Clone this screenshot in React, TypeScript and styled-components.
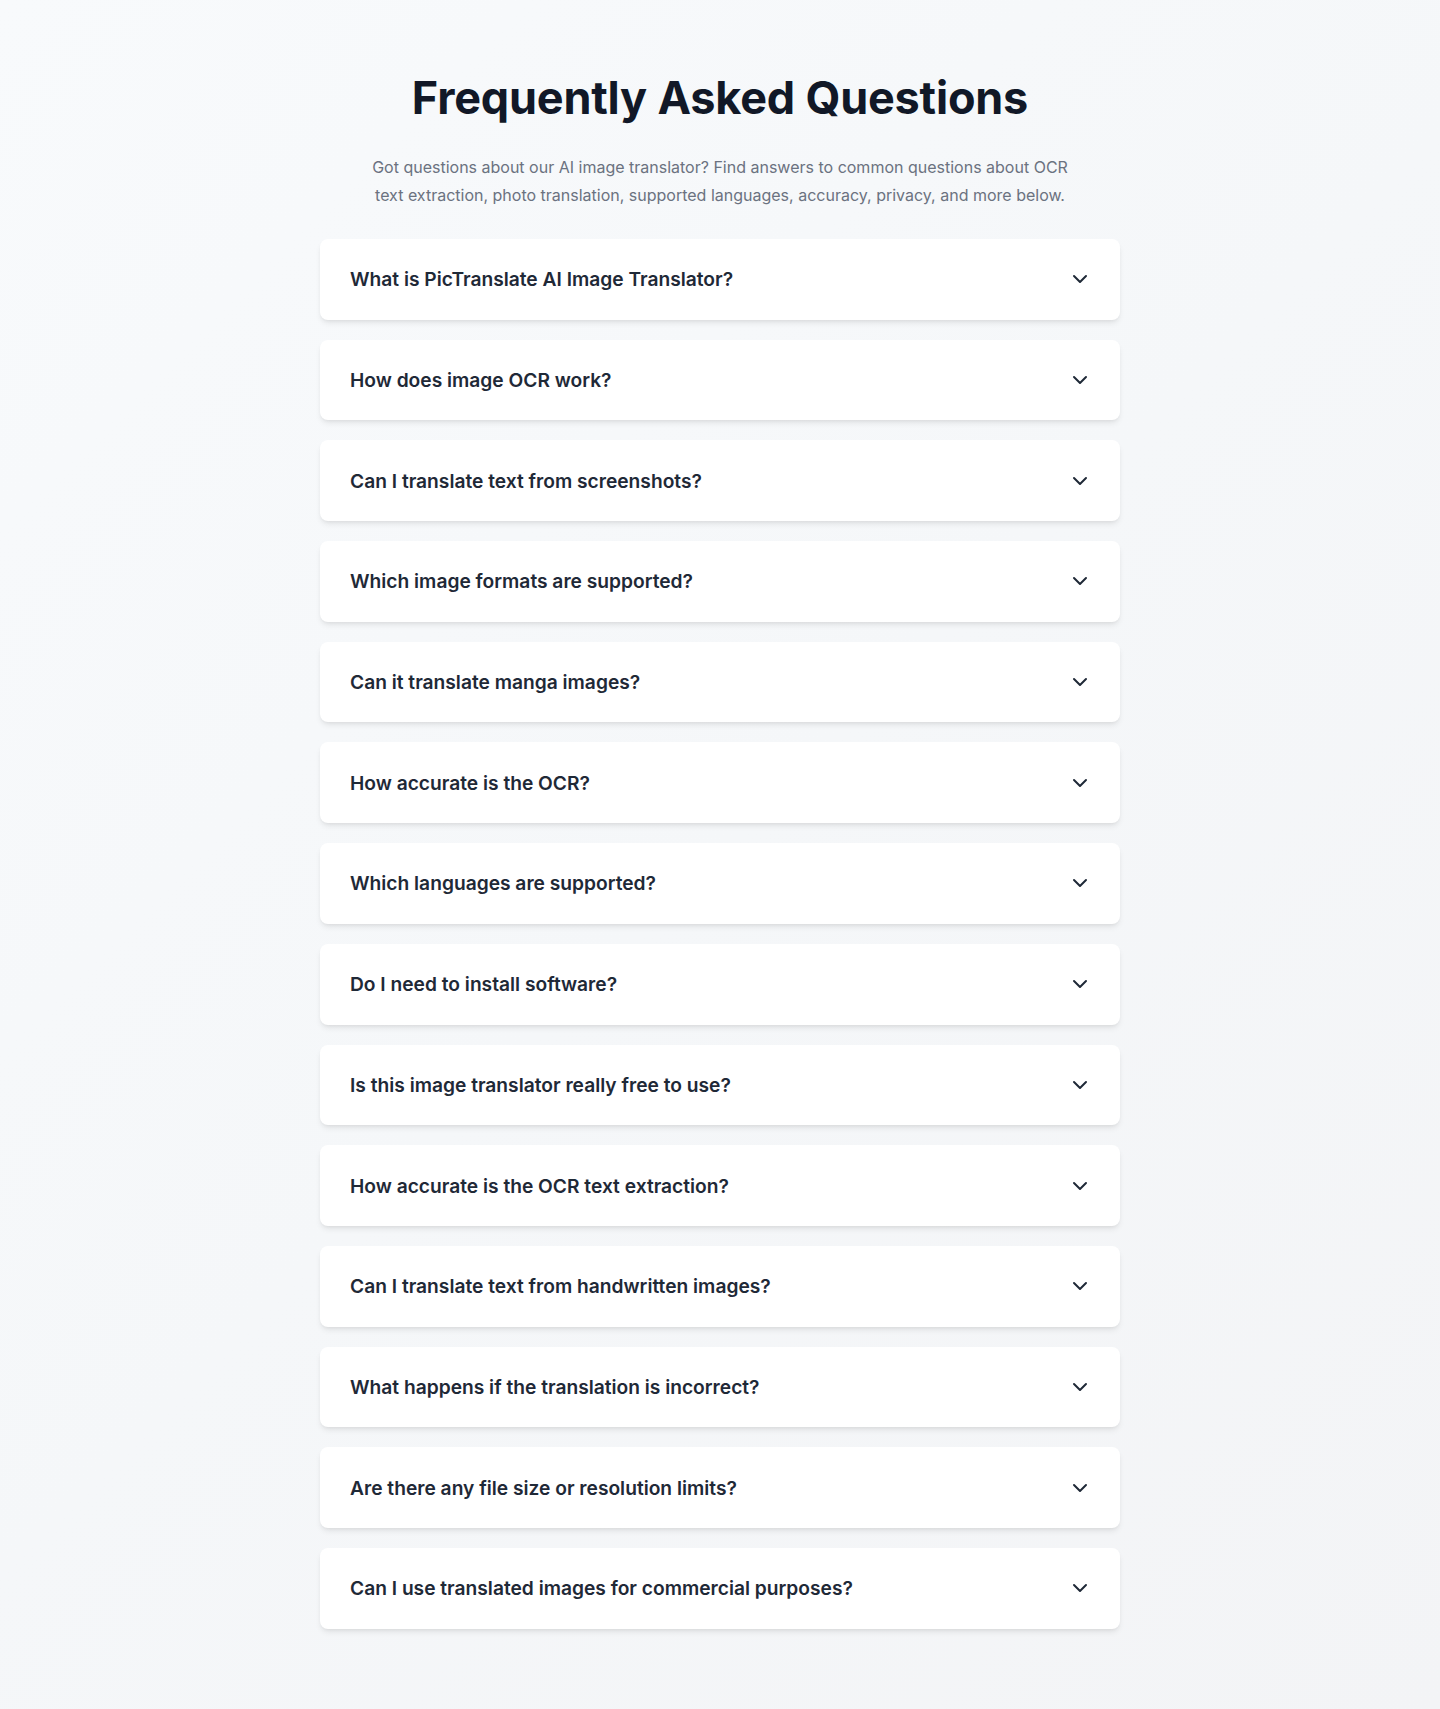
import React from "react";
import styled, { createGlobalStyle } from "styled-components";

const GlobalStyle = createGlobalStyle`
  * { box-sizing: border-box; }
  html, body { margin: 0; padding: 0; }
  body {
    font-family: Inter, "Noto Sans", "Liberation Sans", sans-serif;
    -webkit-font-smoothing: antialiased;
  }
`;

const Page = styled.section`
  min-height: 1709px;
  background: linear-gradient(135deg, #f8fafc 0%, #f5f7f9 50%, #f3f4f6 100%);
  padding: 74px 16px 80px;
  display: flex;
  flex-direction: column;
  align-items: center;
`;

const Title = styled.h2`
  margin: 0 0 31px;
  font-size: 45px;
  line-height: 48px;
  font-weight: 700;
  color: #111827;
  letter-spacing: -0.2px;
  text-align: center;
`;

const Subtitle = styled.p`
  margin: 0 0 30px;
  max-width: 720px;
  font-size: 16px;
  line-height: 28px;
  color: #6b7280;
  text-align: center;
`;

const List = styled.div`
  width: 800px;
  display: flex;
  flex-direction: column;
  gap: 20px;
`;

const Card = styled.div`
  background: #ffffff;
  border-radius: 8px;
  box-shadow: 0 4px 6px -1px rgba(0, 0, 0, 0.08), 0 2px 4px -2px rgba(0, 0, 0, 0.08);
`;

const Question = styled.button`
  width: 100%;
  height: 80.7px;
  padding: 0 28px 0 30px;
  display: flex;
  align-items: center;
  justify-content: space-between;
  background: transparent;
  border: none;
  cursor: pointer;
  font-family: inherit;
  text-align: left;
`;

const QuestionText = styled.span`
  font-size: 19.2px;
  line-height: 28px;
  font-weight: 600;
  color: #1f2937;
`;

const Chevron = styled.svg`
  width: 24px;
  height: 24px;
  flex-shrink: 0;
  color: #1f2937;
`;

const questions = [
  "What is PicTranslate AI Image Translator?",
  "How does image OCR work?",
  "Can I translate text from screenshots?",
  "Which image formats are supported?",
  "Can it translate manga images?",
  "How accurate is the OCR?",
  "Which languages are supported?",
  "Do I need to install software?",
  "Is this image translator really free to use?",
  "How accurate is the OCR text extraction?",
  "Can I translate text from handwritten images?",
  "What happens if the translation is incorrect?",
  "Are there any file size or resolution limits?",
  "Can I use translated images for commercial purposes?",
];

export default function App() {
  return (
    <>
      <GlobalStyle />
      <Page>
        <Title>Frequently Asked Questions</Title>
        <Subtitle>
          Got questions about our AI image translator? Find answers to common questions about OCR
          text extraction, photo translation, supported languages, accuracy, privacy, and more below.
        </Subtitle>
        <List>
          {questions.map((q) => (
            <Card key={q}>
              <Question type="button">
                <QuestionText>{q}</QuestionText>
                <Chevron
                  viewBox="0 0 24 24"
                  fill="none"
                  stroke="currentColor"
                  strokeWidth={2}
                  strokeLinecap="round"
                  strokeLinejoin="round"
                >
                  <path d="m6 9 6 6 6-6" />
                </Chevron>
              </Question>
            </Card>
          ))}
        </List>
      </Page>
    </>
  );
}
